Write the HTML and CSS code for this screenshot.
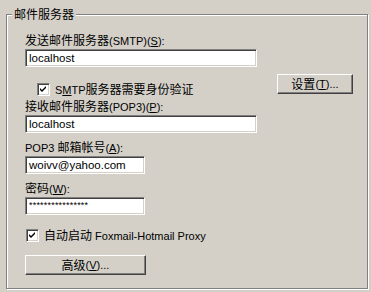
FILE: index.html
```html
<!DOCTYPE html>
<html lang="zh-CN">
<head>
<meta charset="utf-8">
<link rel="stylesheet" href="styles.css">
</head>
<body>
<div class="group">
  <div class="group-title zh">邮件服务器</div>
  <div class="label l1"><span class="zh">发送邮件服务器</span>(SMTP)(<u>S</u>):</div>
  <div class="edit wide">localhost</div>
  <div class="row">
    <label class="check c1">
      <span class="box"><svg width="7" height="7" viewBox="0 0 7 7"><path d="M0 2 L2 4 L6 0 L6 2 L2 6 L0 4 Z" fill="#000"/></svg></span>
      <span>S<u>M</u>TP<span class="zh">服务器需要身份验证</span></span>
    </label>
    <div class="btn b1"><span class="zh">设置</span>(<u>T</u>)...</div>
  </div>
  <div class="label l2"><span class="zh">接收邮件服务器</span>(POP3)(<u>P</u>):</div>
  <div class="edit wide">localhost</div>
  <div class="label l3">POP3 <span class="zh">邮箱帐号</span>(<u>A</u>):</div>
  <div class="edit narrow">woivv@yahoo.com</div>
  <div class="label l4"><span class="zh">密码</span>(<u>W</u>):</div>
  <div class="edit narrow pw">****************</div>
  <label class="check c2">
    <span class="box"><svg width="7" height="7" viewBox="0 0 7 7"><path d="M0 2 L2 4 L6 0 L6 2 L2 6 L0 4 Z" fill="#000"/></svg></span>
    <span><span class="zh">自动启动</span> Foxmail-Hotmail Proxy</span>
  </label>
  <div class="btn b2"><span class="zh">高级</span>(<u>V</u>)...</div>
</div>
</body>
</html>
```
FILE: styles.css
```css
html, body {
  margin: 0;
  padding: 0;
  background: #d4d0c8;
}
body {
  width: 371px;
  height: 292px;
  overflow: hidden;
  font-family: "Liberation Sans", "Noto Sans CJK SC", sans-serif;
  font-size: 11px;
  color: #000;
}
.zh {
  font-family: "Noto Sans CJK SC", sans-serif;
  font-size: 12px;
}
.group {
  position: relative;
  box-sizing: border-box;
  margin: 14px 0 0 6px;
  width: 362px;
  height: 275px;
  border: 1px solid #808080;
  box-shadow: inset 1px 1px 0 #fff, 1px 1px 0 #fff;
  padding: 0 0 0 18px;
}
.group-title {
  position: absolute;
  left: 5px;
  top: -8px;
  padding: 0 2px;
  background: #d4d0c8;
  line-height: 14px;
}
.label {
  line-height: 14px;
  height: 14px;
  white-space: nowrap;
}
.l1 { margin-top: 18px; }
.l2 { margin-top: 2px; }
.l3 { margin-top: 7px; }
.l4 { margin-top: 7px; }
.edit {
  box-sizing: border-box;
  height: 18px;
  margin-top: 2px;
  background: #fff;
  border: 1px solid;
  border-color: #808080 #fff #fff #808080;
  box-shadow: inset 1px 1px 0 #404040, inset -1px -1px 0 #d4d0c8;
  padding: 0 3px;
  line-height: 16px;
  font-size: 11.5px;
  white-space: nowrap;
  overflow: hidden;
}
.wide { width: 232px; }
.narrow { width: 120px; }
.pw {
  font-size: 9px;
  letter-spacing: 0.2px;
  line-height: 14px;
}
.row {
  display: flex;
  align-items: flex-start;
  margin-top: 7px;
  width: 328px;
  justify-content: space-between;
}
.check {
  display: flex;
  align-items: center;
  gap: 5px;
  line-height: 14px;
  white-space: nowrap;
}
.c1 { margin: 8px 0 0 12px; }
.c2 { margin: 13px 0 0 1px; }
.box {
  box-sizing: border-box;
  width: 13px;
  height: 13px;
  background: #fff;
  border: 1px solid;
  border-color: #808080 #fff #fff #808080;
  box-shadow: inset 1px 1px 0 #404040, inset -1px -1px 0 #d4d0c8;
  display: flex;
  align-items: center;
  justify-content: center;
}
.btn {
  box-sizing: border-box;
  height: 20px;
  border: 1px solid;
  border-color: #fff #404040 #404040 #fff;
  box-shadow: inset -1px -1px 0 #808080, inset 1px 1px 0 #d4d0c8;
  display: flex;
  align-items: center;
  justify-content: center;
  line-height: 14px;
  white-space: nowrap;
}
.b1 { width: 76px; }
.b2 { width: 121px; margin-top: 12px; }
```
